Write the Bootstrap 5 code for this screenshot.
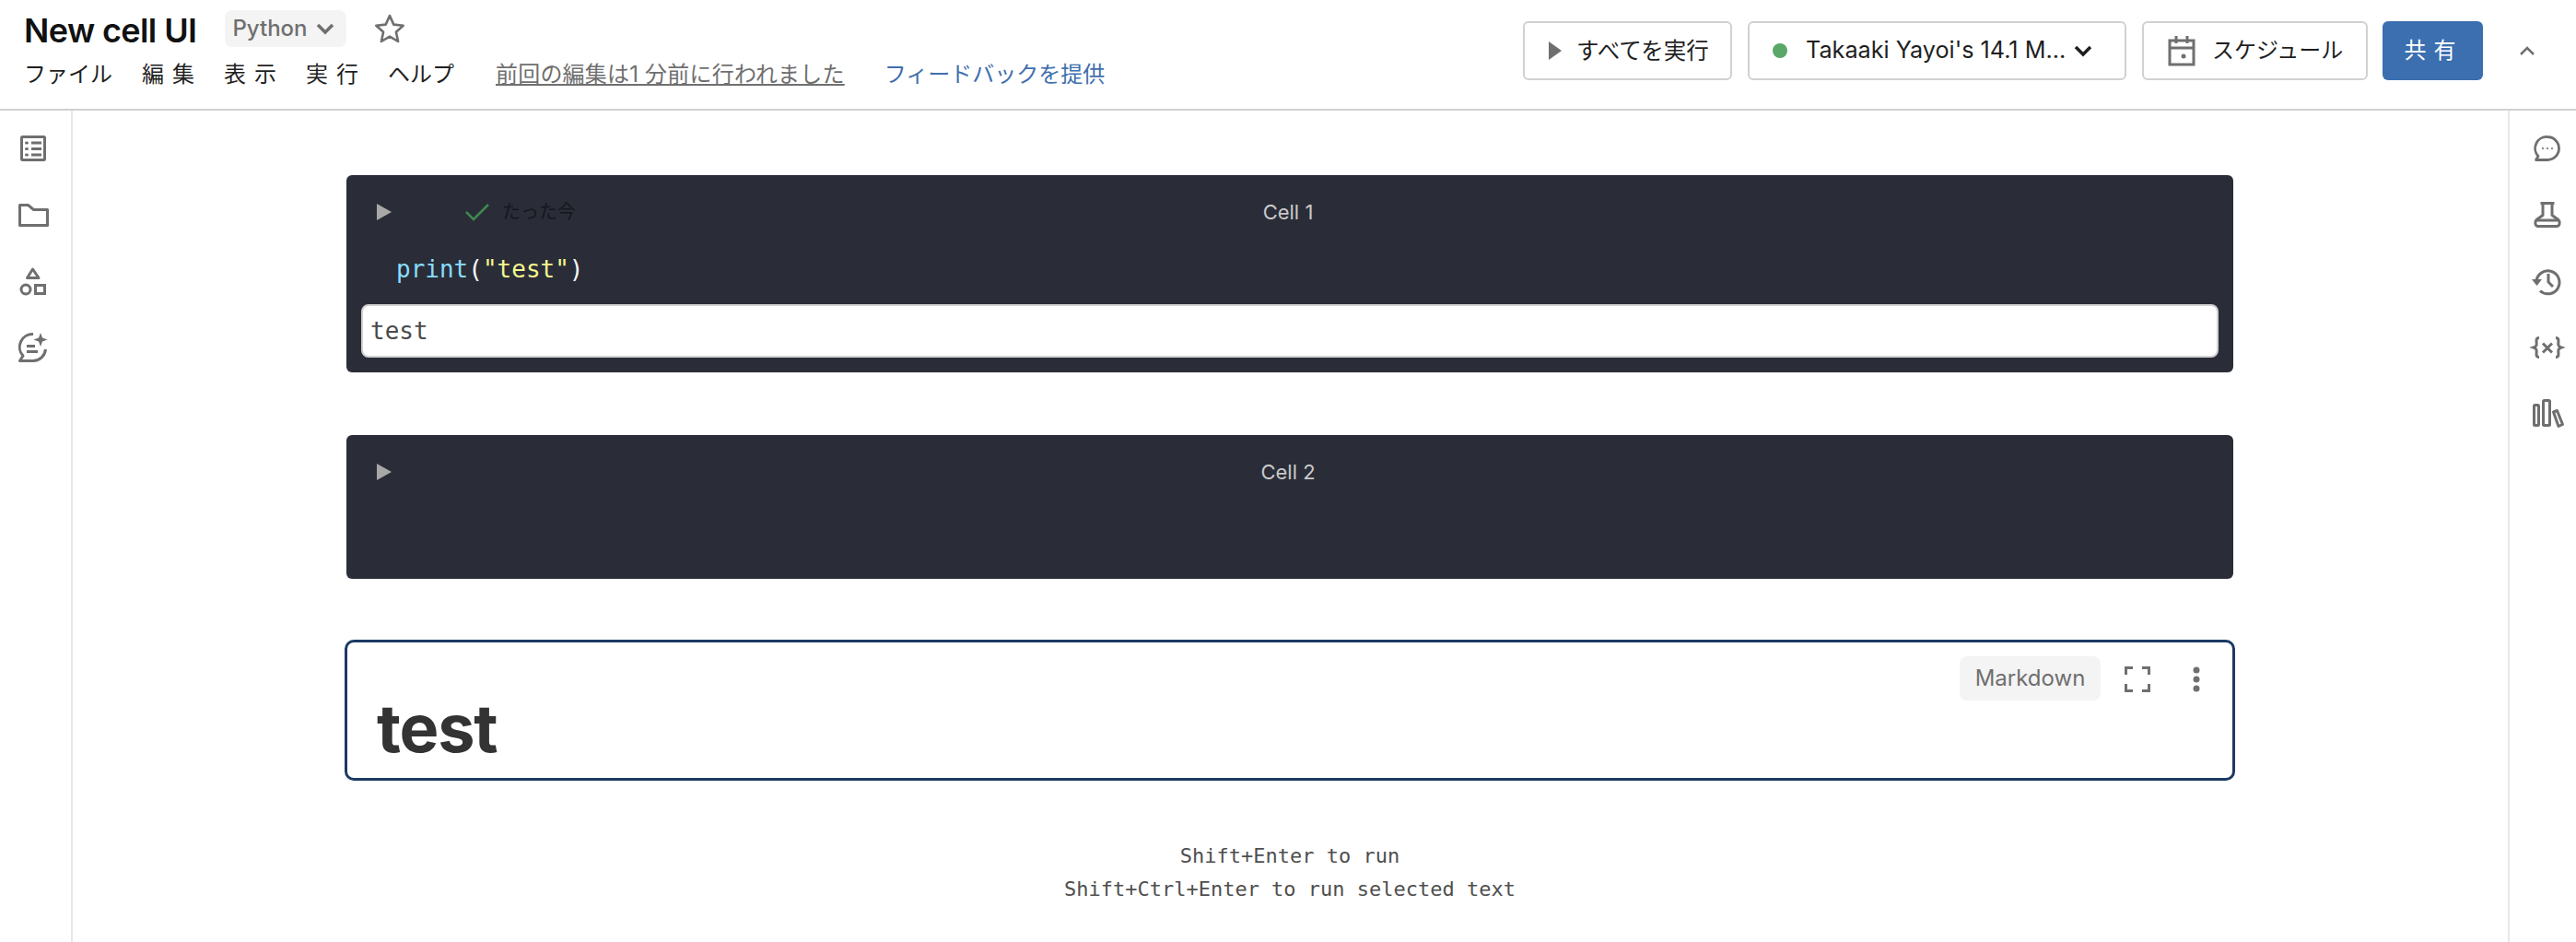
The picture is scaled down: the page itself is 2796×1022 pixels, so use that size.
<!DOCTYPE html>
<html lang="ja">
<head>
<meta charset="utf-8">
<title>New cell UI</title>
<link href="https://cdn.jsdelivr.net/npm/bootstrap@5.3.0/dist/css/bootstrap.min.css" rel="stylesheet">
<style>
html,body{height:100%;overflow:hidden}
body{font-family:Inter,"Noto Sans CJK JP",sans-serif;color:#1f1f1f;background:#fff;font-size:24px}
.top-bar{height:120px;border-bottom:2px solid #d1d1d1;padding:0 44px 0 26px}
.nb-title{font-size:36px;font-weight:600;line-height:44px;letter-spacing:-.6px;color:#111;position:relative;top:2px}
.lang-pill{height:40px;width:132px;margin-left:31px;background:#f4f4f4;border-radius:8px;color:#6f6f6f;font-size:24px;font-weight:500;padding-left:8px;gap:8px}
.star-ico{margin-left:30px}
.title-row{height:44px;margin-top:1px}
.menu-row{margin-top:10px;height:36px;font-size:24px;line-height:36px}
.menu-item{margin-right:32px;color:#1f1f1f}
.spaced{letter-spacing:9px;margin-right:23px}
.edit-note{color:#6f6f6f;text-decoration:underline;margin-left:13px;margin-right:43px;letter-spacing:.2px}
.fb-link{color:#3f6fae;text-decoration:none}
.tool-btn{height:64px;background:#fff;border:2px solid #d1d1d1;border-radius:6px;color:#1f1f1f;font-size:24px;padding:0;display:flex;align-items:center}
.run-label{font-size:24.500px}
.btn-run{width:227px;padding-left:25px;gap:15px;margin-right:17px}
.btn-cluster{width:411px;padding-left:25px;margin-right:17px}
.cluster-dot{width:16px;height:16px;background:#5aa867;border-radius:50%;margin-right:20px}
.cluster-name{font-size:25.200px}
.btn-sched{width:245px;padding-left:26px;gap:18px;margin-right:16px}
.btn-share{width:109px;height:64px;background:#3b6fb0;border:0;border-radius:6px;color:#fff;font-size:24px;letter-spacing:8px;padding-left:8px}
.collapse-ico{margin-left:39px}
.main-area{height:902px}
.side-rail{width:79px;border-right:2px solid #e8e8e8;flex:none;padding:21px 5px 0 0;gap:32px;align-items:center}
.side-rail.right-rail{width:74px;border-right:0;border-left:2px solid #e8e8e8;padding:21px 0 0 10px}
.rail-icon{width:40px;height:40px;display:block}
.canvas-area{flex:1 1 auto;min-width:0;padding:70px 0 0 297px}
.cell-box{width:2048px;background:#2a2d38;border-radius:6px;position:relative}
.cell-one{height:214px;margin-bottom:68px}
.cell-two{height:156px;margin-bottom:66px}
.cell-head{height:80px;padding-left:33px;position:relative}
.cell-name{position:absolute;top:26px;left:-2px;width:100%;text-align:center;color:#c9c9c9;font-size:22px;line-height:28px}
.cell-two .cell-name{top:26px}
.done-time{font-size:20px;color:#15171c;margin-left:14px}
.check-ico{margin-left:80px}
.code-line{font-family:"DejaVu Sans Mono","Liberation Mono",monospace;font-size:26px;line-height:32px;padding-left:54px;margin-top:6px;color:#f5f5f5}
.tok-fn{color:#89ddff}.tok-str{color:#f4f78f}
.out-box{position:absolute;left:16px;right:16px;top:140px;height:58px;background:#fff;border:2px solid #d1d1d1;border-radius:8px;font-family:"DejaVu Sans Mono",monospace;font-size:26px;line-height:54px;padding-left:8px;color:#4a4a4a}
.md-box{width:2052px;height:153px;margin-left:-2px;border:3px solid #1b3a63;border-radius:10px;position:relative;padding:49px 0 0 32px}
.md-head{font-size:72px;font-weight:700;line-height:88px;color:#333;letter-spacing:-1.2px}
.md-tools{position:absolute;top:15px;right:35px}
.md-tag{width:153px;height:48px;background:#f4f4f4;border-radius:8px;color:#6f6f6f;font-size:24px;justify-content:center;margin-right:26px}
.md-tools svg{position:relative;top:1px}
.md-more{margin-left:46px}
.hint-box{width:2048px;margin-top:64px;text-align:center;font-family:"DejaVu Sans Mono",monospace;font-size:22px;line-height:36px;color:#4f4f4f}
</style>
</head>
<body>
<header class="top-bar d-flex justify-content-between align-items-start">
  <div class="d-flex flex-column pt-2">
    <div class="title-row d-flex align-items-center">
      <span class="nb-title">New cell UI</span>
      <span class="lang-pill d-flex align-items-center">Python
        <svg width="22" height="14" viewBox="0 0 22 14"><path d="M3 3l8 8 8-8" fill="none" stroke="#6f6f6f" stroke-width="3.500"/></svg>
      </span>
      <svg class="star-ico" width="34" height="34" viewBox="0 0 34 34"><path d="M17 3l4.300 9.600 10.400 1.100-7.800 7 2.200 10.300L17 25.700 7.900 31l2.200-10.300-7.800-7 10.400-1.100z" fill="none" stroke="#6f6f6f" stroke-width="2.600" stroke-linejoin="round"/></svg>
    </div>
    <nav class="menu-row d-flex">
      <span class="menu-item">ファイル</span>
      <span class="menu-item spaced">編集</span>
      <span class="menu-item spaced">表示</span>
      <span class="menu-item spaced">実行</span>
      <span class="menu-item">ヘルプ</span>
      <span class="edit-note">前回の編集は1 分前に行われました</span>
      <a class="fb-link" href="#">フィードバックを提供</a>
    </nav>
  </div>
  <div class="d-flex align-items-center" style="margin-top:23px">
    <button class="tool-btn btn-run" type="button">
      <svg width="16" height="22" viewBox="0 0 16 22"><path d="M1 1l14 10L1 21z" fill="#6f6f6f"/></svg><span class="run-label">すべてを実行</span>
    </button>
    <button class="tool-btn btn-cluster" type="button">
      <span class="cluster-dot"></span><span class="cluster-name">Takaaki Yayoi's 14.1 M...</span>
      <svg class="ms-2" width="22" height="14" viewBox="0 0 22 14"><path d="M3 3l8 8 8-8" fill="none" stroke="#1f1f1f" stroke-width="3.500"/></svg>
    </button>
    <button class="tool-btn btn-sched" type="button">
      <svg width="30" height="34" viewBox="0 0 30 34"><path d="M2 6h26v26H2zM2 14h26M9 1v8M21 1v8" fill="none" stroke="#6f6f6f" stroke-width="3"/><circle cx="17" cy="23" r="2.500" fill="#6f6f6f"/></svg>スケジュール
    </button>
    <button class="btn-share" type="button">共有</button>
    <svg class="collapse-ico" width="18" height="12" viewBox="0 0 18 12"><path d="M2 10l7-7 7 7" fill="none" stroke="#6f6f6f" stroke-width="2.500"/></svg>
  </div>
</header>
<div class="main-area d-flex">
  <aside class="side-rail d-flex flex-column">
    <svg class="rail-icon" viewBox="0 0 40 40" fill="none" stroke="#6f6f6f" stroke-width="3"><rect x="7.500" y="7.500" width="25" height="25" rx="1"/><path d="M18 14h11M18 20.500h11M18 27h11"/><path d="M12.500 14h1M12.500 20.500h1M12.500 27h1" stroke-linecap="round"/></svg>
    <svg class="rail-icon" viewBox="0 0 40 40" fill="none" stroke="#6f6f6f" stroke-width="3"><path d="M5.500 9.500h9l6 5h15v17h-30z" stroke-linejoin="round"/></svg>
    <svg class="rail-icon" viewBox="0 0 40 40" fill="none" stroke="#6f6f6f" stroke-width="3"><path d="M19.500 7L26 16.500H13.500z" stroke-linejoin="round"/><circle cx="12" cy="29" r="5"/><rect x="22.500" y="24.500" width="10" height="9"/></svg>
    <svg class="rail-icon" viewBox="0 0 40 40" fill="none" stroke="#6f6f6f" stroke-width="3"><path d="M20 5.500A14 14 0 0 0 9 29l-3.500 5.500H20A14 14 0 0 0 33.500 22" stroke-linejoin="round"/><path d="M13 18.500h9M13 24.500h12"/><path d="M28 4l2 5.500 5.500 2-5.500 2-2 5.500-2-5.500-5.500-2 5.500-2z" fill="#6f6f6f" stroke="none"/></svg>
  </aside>
  <main class="canvas-area">
    <section class="cell-box cell-one">
      <div class="cell-head d-flex align-items-center">
        <svg width="16" height="18" viewBox="0 0 16 18"><path d="M0 0l16 9-16 9z" fill="#a8a8a8"/></svg>
        <svg class="check-ico" width="26" height="20" viewBox="0 0 26 20"><path d="M1 10l8 8L25 2" fill="none" stroke="#3f8a4e" stroke-width="2.500"/></svg>
        <span class="done-time">たった今</span>
        <div class="cell-name">Cell 1</div>
      </div>
      <div class="code-line"><span class="tok-fn">print</span>(<span class="tok-str">"test"</span>)</div>
      <div class="out-box">test</div>
    </section>
    <section class="cell-box cell-two">
      <div class="cell-head d-flex align-items-center">
        <svg width="16" height="18" viewBox="0 0 16 18"><path d="M0 0l16 9-16 9z" fill="#a8a8a8"/></svg>
        <div class="cell-name">Cell 2</div>
      </div>
    </section>
    <section class="md-box">
      <div class="md-head">test</div>
      <div class="md-tools d-flex align-items-center">
        <span class="md-tag d-flex align-items-center">Markdown</span>
        <svg width="28" height="28" viewBox="0 0 28 28"><path d="M1.500 9V1.500H9M19 1.500h7.500V9M26.500 19v7.500H19M9 26.500H1.500V19" fill="none" stroke="#6f6f6f" stroke-width="3"/></svg>
        <svg class="md-more" width="8" height="28" viewBox="0 0 8 28"><circle cx="4" cy="4" r="3.500" fill="#6f6f6f"/><circle cx="4" cy="14" r="3.500" fill="#6f6f6f"/><circle cx="4" cy="24" r="3.500" fill="#6f6f6f"/></svg>
      </div>
    </section>
    <div class="hint-box">Shift+Enter to run<br>Shift+Ctrl+Enter to run selected text</div>
  </main>
  <aside class="side-rail right-rail d-flex flex-column">
    <svg class="rail-icon" viewBox="0 0 40 40" fill="none" stroke="#6f6f6f" stroke-width="2.800"><path d="M20 7.500a12.500 12.500 0 1 1 0 25H7.500l2.500-4a12.500 12.500 0 0 1 10-21z" stroke-linejoin="round"/><circle cx="15" cy="20" r="1.100" fill="#6f6f6f" stroke="none"/><circle cx="20" cy="20" r="1.100" fill="#6f6f6f" stroke="none"/><circle cx="25" cy="20" r="1.100" fill="#6f6f6f" stroke="none"/></svg>
    <svg class="rail-icon" viewBox="0 0 40 40" fill="none" stroke="#6f6f6f" stroke-width="3"><path d="M15 7.500h10v13l7 5c2 2 1.500 7-2 7H10c-3.500 0-4-5-2-7l7-5z" stroke-linejoin="round"/><path d="M12.500 7.500h15M8 26h24"/></svg>
    <svg class="rail-icon" viewBox="0 0 40 40" fill="none" stroke="#6f6f6f" stroke-width="3"><path d="M8 21a12.500 12.500 0 1 1 4 9.500"/><path d="M3 18h11l-5.500 7z" fill="#6f6f6f" stroke="none"/><path d="M21 12v9l5 5"/></svg>
    <svg class="rail-icon" viewBox="0 0 40 40" fill="none" stroke="#6f6f6f" stroke-width="3"><path d="M11 9.500c-5 0-2 6-3 8-.5 1.500-1.500 2-3 2.500 1.500.5 2.500 1 3 2.500 1 2-2 8 3 8M29 9.500c5 0 2 6 3 8 .5 1.500 1.500 2 3 2.500-1.500.5-2.500 1-3 2.500-1 2 2 8-3 8M15 15.500l10 10M25 15.500l-10 10"/></svg>
    <svg class="rail-icon" viewBox="0 0 40 40" fill="none" stroke="#6f6f6f" stroke-width="3"><rect x="5.500" y="10.500" width="5" height="22" rx="1"/><rect x="15.500" y="5.500" width="7" height="27" rx="1"/><path d="M26.500 18l4-1.500 6 15-4.500 2z" stroke-linejoin="round"/></svg>
  </aside>
</div>
<script src="https://cdn.jsdelivr.net/npm/bootstrap@5.3.0/dist/js/bootstrap.bundle.min.js"></script>
</body>
</html>
